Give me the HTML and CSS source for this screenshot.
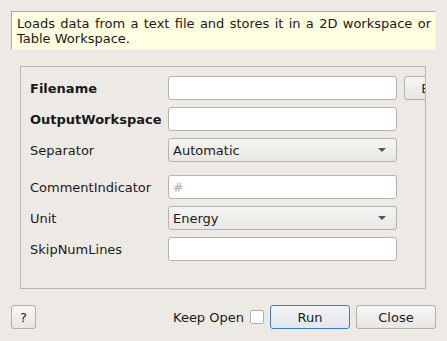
FILE: index.html
```html
<!DOCTYPE html>
<html lang="en">
<head>
  <meta charset="UTF-8">
  <title>LoadAscii</title>
  <link rel="stylesheet" href="styles.css">
</head>
<body>
  <!-- algorithm description -->
  <div class="desc">Loads data from a text file and stores it in a 2D workspace or Table Workspace.</div>

  <!-- property grid -->
  <div class="group">
    <div class="row">
      <span class="label bold">Filename</span>
      <input class="field" type="text">
      <button class="btn browse">Browse</button>
    </div>
    <div class="row">
      <span class="label bold">OutputWorkspace</span>
      <input class="field" type="text">
    </div>
    <div class="row">
      <span class="label">Separator</span>
      <div class="combo"><span>Automatic</span><i class="arrow"></i></div>
    </div>
    <div class="row spaced">
      <span class="label">CommentIndicator</span>
      <input class="field" type="text" placeholder="#">
    </div>
    <div class="row">
      <span class="label">Unit</span>
      <div class="combo"><span>Energy</span><i class="arrow"></i></div>
    </div>
    <div class="row">
      <span class="label">SkipNumLines</span>
      <input class="field" type="text">
    </div>
  </div>

  <!-- bottom buttons -->
  <div class="footer">
    <button class="btn help">?</button>
    <span class="keep">Keep Open</span>
    <span class="check"></span>
    <button class="btn run">Run</button>
    <button class="btn close">Close</button>
  </div>
</body>
</html>
```

FILE: styles.css
```css
body {
  margin: 0;
  background-color: #edeae6;
  font-family: "DejaVu Sans", sans-serif;
  font-size: 13px;
  color: #1a1a1a;
}

/* 설명 박스 */
.desc {
  margin: 11px 11px 0 11px;
  height: 39px;
  box-sizing: border-box;
  padding: 4px 4px 0 5px;
  background-color: #fffee0;
  border-top: 1px solid #a9a6a2;
  border-left: 1px solid #a9a6a2;
  border-right: 1px solid #f7f6f4;
  border-bottom: 1px solid #f7f6f4;
  line-height: 15px;
  text-align: justify;
}

/* 속성 그룹 */
.group {
  margin: 16px 0 0 20px;
  width: 406px;
  height: 223px;
  box-sizing: border-box;
  border: 1px solid #bab6b1;
  padding: 9px 0 0 9px;
  overflow: hidden;
}

.row {
  display: flex;
  align-items: center;
  height: 24px;
  margin-bottom: 7px;
  white-space: nowrap;
}

.row.spaced {
  margin-top: 13px; /* 이전 행과 추가 간격 */
}

.label {
  width: 138px;
  flex-shrink: 0;
}

.bold {
  font-weight: bold;
}

.field {
  width: 229px;
  height: 24px;
  box-sizing: border-box;
  margin: 0;
  border: 1px solid #b6b2ad;
  border-radius: 3px;
  background: #ffffff;
  font-family: inherit;
  font-size: 13px;
  padding: 0 4px;
  flex-shrink: 0;
}

.field::placeholder {
  color: #ababab;
  font-size: 12px;
}

.combo {
  width: 229px;
  height: 24px;
  box-sizing: border-box;
  border: 1px solid #b6b2ad;
  border-radius: 3px;
  background: linear-gradient(#f6f5f3, #e9e7e4);
  display: flex;
  align-items: center;
  justify-content: space-between;
  padding: 0 10px 0 4px;
  flex-shrink: 0;
}

.arrow {
  width: 0;
  height: 0;
  border-left: 4px solid transparent;
  border-right: 4px solid transparent;
  border-top: 4px solid #555555;
}

.btn {
  height: 24px;
  box-sizing: border-box;
  margin: 0;
  border: 1px solid #b2aea9;
  border-radius: 3px;
  background: linear-gradient(#f7f6f5, #e8e6e3);
  font-family: inherit;
  font-size: 13px;
  color: #1a1a1a;
  padding: 0;
  flex-shrink: 0;
}

.browse {
  width: 82px;
  margin-left: 7px;
}

/* 하단 버튼 */
.footer {
  display: flex;
  align-items: center;
  margin: 16px 0 0 11px;
  height: 24px;
}

.help {
  width: 25px;
}

.keep {
  margin-left: 137px;
}

.check {
  width: 14px;
  height: 14px;
  box-sizing: border-box;
  border: 1px solid #b2aea9;
  background: #ffffff;
  border-radius: 2px;
  margin-left: 6px;
}

.run {
  width: 80px;
  margin-left: 6px;
  border-color: #3f7fb0;
  background: linear-gradient(#f1f4f7, #e2e7ec);
}

.close {
  width: 80px;
  margin-left: 6px;
}
```
